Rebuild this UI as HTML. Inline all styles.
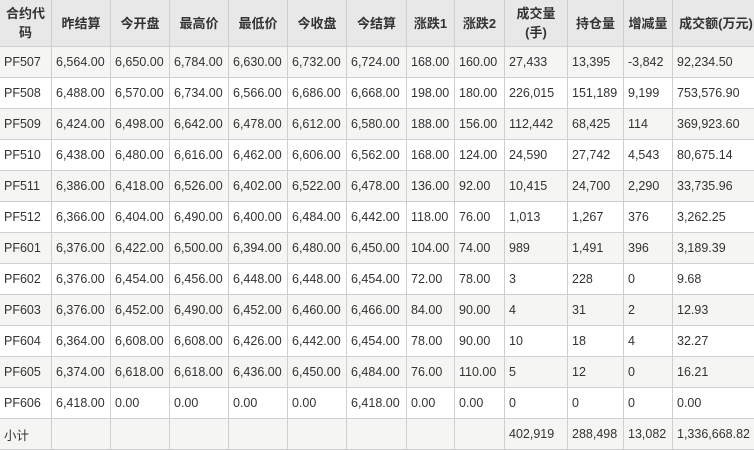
<html><head><style>
body{margin:0;background:#fff;font-family:"Liberation Sans","Noto Sans CJK SC",sans-serif;}
table{border-collapse:collapse;table-layout:fixed;width:760px;font-size:12.5px;color:#333;}
td,th{border:1px solid #cfcfcf;height:31px;padding:0 0 0 4px;text-align:left;white-space:nowrap;overflow:hidden;box-sizing:border-box;}
th{background:#e8e8e8;font-weight:bold;text-align:center;height:47px;line-height:19px;padding:0;font-size:13px;}
tr:nth-child(even) td{background:#f5f5f3;}
tr:nth-child(odd) td{background:#fff;}
</style></head><body>
<table style="margin-top:-1px;margin-left:-1px">
<colgroup><col style="width:52px"><col style="width:59px"><col style="width:59px"><col style="width:59px"><col style="width:59px"><col style="width:59px"><col style="width:60px"><col style="width:48px"><col style="width:50px"><col style="width:63px"><col style="width:56px"><col style="width:49px"><col style="width:87px"></colgroup>
<tr><th>合约代<br>码</th><th>昨结算</th><th>今开盘</th><th>最高价</th><th>最低价</th><th>今收盘</th><th>今结算</th><th>涨跌1</th><th>涨跌2</th><th>成交量<br>(手)</th><th>持仓量</th><th>增减量</th><th>成交额(万元)</th></tr>
<tr><td>PF507</td><td>6,564.00</td><td>6,650.00</td><td>6,784.00</td><td>6,630.00</td><td>6,732.00</td><td>6,724.00</td><td>168.00</td><td>160.00</td><td>27,433</td><td>13,395</td><td>-3,842</td><td>92,234.50</td></tr>
<tr><td>PF508</td><td>6,488.00</td><td>6,570.00</td><td>6,734.00</td><td>6,566.00</td><td>6,686.00</td><td>6,668.00</td><td>198.00</td><td>180.00</td><td>226,015</td><td>151,189</td><td>9,199</td><td>753,576.90</td></tr>
<tr><td>PF509</td><td>6,424.00</td><td>6,498.00</td><td>6,642.00</td><td>6,478.00</td><td>6,612.00</td><td>6,580.00</td><td>188.00</td><td>156.00</td><td>112,442</td><td>68,425</td><td>114</td><td>369,923.60</td></tr>
<tr><td>PF510</td><td>6,438.00</td><td>6,480.00</td><td>6,616.00</td><td>6,462.00</td><td>6,606.00</td><td>6,562.00</td><td>168.00</td><td>124.00</td><td>24,590</td><td>27,742</td><td>4,543</td><td>80,675.14</td></tr>
<tr><td>PF511</td><td>6,386.00</td><td>6,418.00</td><td>6,526.00</td><td>6,402.00</td><td>6,522.00</td><td>6,478.00</td><td>136.00</td><td>92.00</td><td>10,415</td><td>24,700</td><td>2,290</td><td>33,735.96</td></tr>
<tr><td>PF512</td><td>6,366.00</td><td>6,404.00</td><td>6,490.00</td><td>6,400.00</td><td>6,484.00</td><td>6,442.00</td><td>118.00</td><td>76.00</td><td>1,013</td><td>1,267</td><td>376</td><td>3,262.25</td></tr>
<tr><td>PF601</td><td>6,376.00</td><td>6,422.00</td><td>6,500.00</td><td>6,394.00</td><td>6,480.00</td><td>6,450.00</td><td>104.00</td><td>74.00</td><td>989</td><td>1,491</td><td>396</td><td>3,189.39</td></tr>
<tr><td>PF602</td><td>6,376.00</td><td>6,454.00</td><td>6,456.00</td><td>6,448.00</td><td>6,448.00</td><td>6,454.00</td><td>72.00</td><td>78.00</td><td>3</td><td>228</td><td>0</td><td>9.68</td></tr>
<tr><td>PF603</td><td>6,376.00</td><td>6,452.00</td><td>6,490.00</td><td>6,452.00</td><td>6,460.00</td><td>6,466.00</td><td>84.00</td><td>90.00</td><td>4</td><td>31</td><td>2</td><td>12.93</td></tr>
<tr><td>PF604</td><td>6,364.00</td><td>6,608.00</td><td>6,608.00</td><td>6,426.00</td><td>6,442.00</td><td>6,454.00</td><td>78.00</td><td>90.00</td><td>10</td><td>18</td><td>4</td><td>32.27</td></tr>
<tr><td>PF605</td><td>6,374.00</td><td>6,618.00</td><td>6,618.00</td><td>6,436.00</td><td>6,450.00</td><td>6,484.00</td><td>76.00</td><td>110.00</td><td>5</td><td>12</td><td>0</td><td>16.21</td></tr>
<tr><td>PF606</td><td>6,418.00</td><td>0.00</td><td>0.00</td><td>0.00</td><td>0.00</td><td>6,418.00</td><td>0.00</td><td>0.00</td><td>0</td><td>0</td><td>0</td><td>0.00</td></tr>
<tr><td>小计</td><td></td><td></td><td></td><td></td><td></td><td></td><td></td><td></td><td>402,919</td><td>288,498</td><td>13,082</td><td>1,336,668.82</td></tr>
</table>
</body></html>
